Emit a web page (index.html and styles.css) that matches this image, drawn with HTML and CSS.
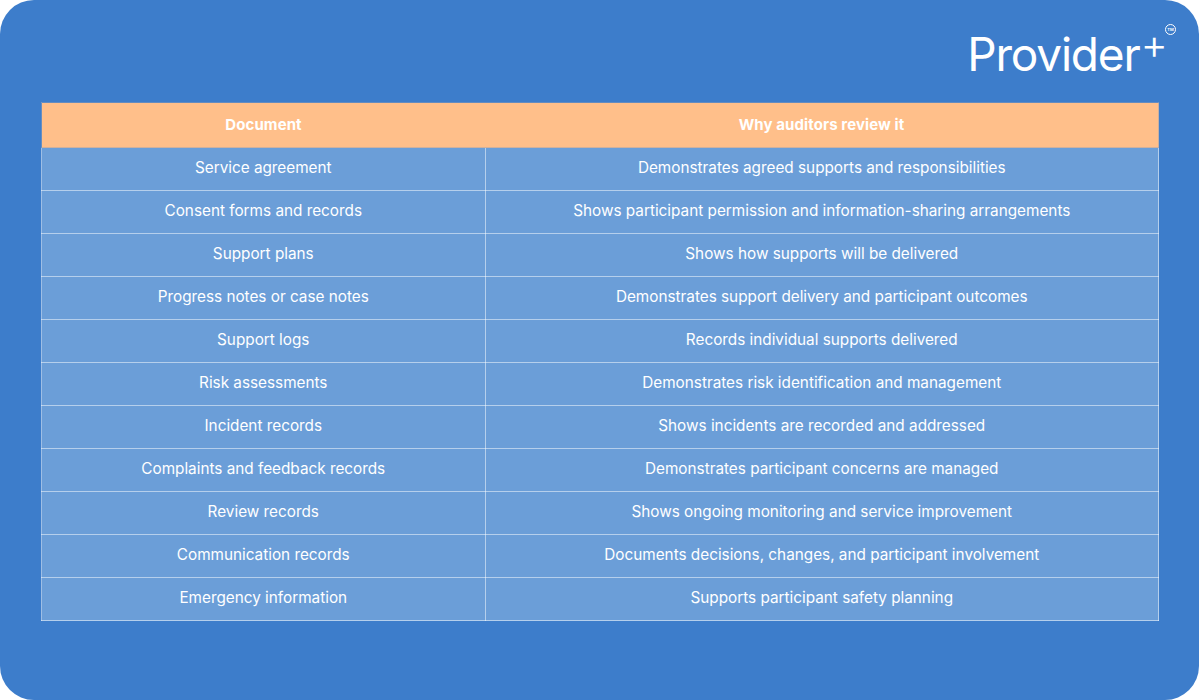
FILE: index.html
```html
<!DOCTYPE html>
<html lang="en">
<head>
<meta charset="utf-8">
<link rel="stylesheet" href="styles.css">
</head>
<body>
<div class="card">
  <div class="top">
    <div class="logo"><span class="word">Provider</span><span class="plus">+</span><span class="tm">TM</span></div>
  </div>
  <table class="docs">
    <thead>
      <tr><th class="c1">Document</th><th class="c2">Why auditors review it</th></tr>
    </thead>
    <tbody>
      <tr><td>Service agreement</td><td>Demonstrates agreed supports and responsibilities</td></tr>
      <tr><td>Consent forms and records</td><td>Shows participant permission and information-sharing arrangements</td></tr>
      <tr><td>Support plans</td><td>Shows how supports will be delivered</td></tr>
      <tr><td>Progress notes or case notes</td><td>Demonstrates support delivery and participant outcomes</td></tr>
      <tr><td>Support logs</td><td>Records individual supports delivered</td></tr>
      <tr><td>Risk assessments</td><td>Demonstrates risk identification and management</td></tr>
      <tr><td>Incident records</td><td>Shows incidents are recorded and addressed</td></tr>
      <tr><td>Complaints and feedback records</td><td>Demonstrates participant concerns are managed</td></tr>
      <tr><td>Review records</td><td>Shows ongoing monitoring and service improvement</td></tr>
      <tr><td>Communication records</td><td>Documents decisions, changes, and participant involvement</td></tr>
      <tr><td>Emergency information</td><td>Supports participant safety planning</td></tr>
    </tbody>
  </table>
</div>
</body>
</html>
```
FILE: styles.css
```css
html, body {
  margin: 0;
  padding: 0;
  background: #ffffff;
}
body {
  font-family: Inter, "Noto Sans", sans-serif;
}
.card {
  width: 1199px;
  height: 700px;
  box-sizing: border-box;
  background: #3d7dcb;
  border-radius: 34px;
  padding: 18px 41px 0 41px;
}
.top {
  display: flex;
  justify-content: flex-end;
  height: 84px;
}
.logo {
  position: relative;
  color: #ffffff;
  margin-right: -18px;
  height: 52px;
  line-height: 52px;
  padding-right: 8px;
}
.word {
  font-size: 46px;
  font-weight: 400;
  letter-spacing: -1.2px;
}
.plus {
  font-size: 42px;
  font-weight: 300;
  vertical-align: 12px;
  margin-left: 1px;
}
.tm {
  position: absolute;
  top: 6px;
  right: 0;
  width: 9px;
  height: 9px;
  border: 1px solid #fff;
  border-radius: 50%;
  font-size: 4px;
  line-height: 9px;
  text-align: center;
  font-weight: 700;
}
.docs {
  width: 1118px;
  border-collapse: collapse;
  color: #ffffff;
}
.docs th {
  background: #ffbf8a;
  height: 42px;
  padding: 0 0 2px 0;
  font-size: 15px;
  font-weight: 700;
  letter-spacing: 0.1px;
  border: 1px solid rgba(150, 160, 180, 0.45);
  border-right: none;
  border-left: none;
}
.docs th.c1 { width: 443px; border-left: 1px solid rgba(150,160,180,0.5); }
.docs th.c2 { border-right: 1px solid rgba(150,160,180,0.5); }
.docs td {
  background: #6b9ed8;
  height: 43px;
  padding: 0 0 3px 0;
  box-sizing: border-box;
  text-align: center;
  font-size: 15.3px;
  font-weight: 400;
  border: 1px solid rgba(255, 255, 255, 0.5);
}
```
